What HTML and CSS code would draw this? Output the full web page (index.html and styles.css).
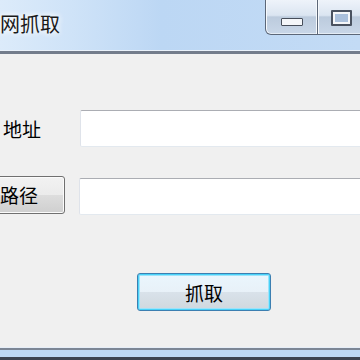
FILE: index.html
```html
<!DOCTYPE html>
<html lang="zh-CN">
<head>
    <meta charset="UTF-8">
    <meta name="viewport" content="width=device-width, initial-scale=1.0">
    <title>网页抓取</title>
    <link rel="stylesheet" href="styles.css">
</head>
<body>
    <div class="window">
        <div class="titlebar">
            <div class="title">网抓取</div>
            <div class="controls">
                <div class="ctl ctl-min"><span class="glyph-min"></span></div>
                <div class="ctl ctl-max"><span class="glyph-max"></span></div>
            </div>
        </div>

        <div class="client">
            <div class="row row-url">
                <div class="label">地址</div>
                <input class="textbox" type="text">
            </div>
            <div class="row row-path">
                <button class="btn btn-path">路径</button>
                <input class="textbox" type="text">
            </div>
            <div class="row row-go">
                <button class="btn btn-default">抓取</button>
            </div>
        </div>

        <div class="frame-bottom"></div>
    </div>
</body>
</html>
```

FILE: styles.css
```css
html, body {
    margin: 0;
    padding: 0;
}
body {
    width: 360px;
    height: 360px;
    overflow: hidden;
    font-family: "Noto Sans CJK SC", "Liberation Sans", sans-serif;
    background-color: #f0f0f0;
}
.window {
    display: flex;
    flex-direction: column;
    height: 360px;
}

/* title bar */
.titlebar {
    height: 50px;
    display: flex;
    justify-content: space-between;
    background: linear-gradient(90deg, #dcebfa 0%, #cfe3f8 20%, #bcd7f4 45%, #c3dbf5 100%);
    border-bottom: 1px solid #e9f1fa;
    box-shadow: 0 1px 0 #f7f7f7;
}
.title {
    margin-left: 0;
    padding-top: 11px;
    font-size: 20px;
    line-height: 26px;
    color: #1a1a1a;
    text-shadow: 0 0 6px #ffffff, 0 0 6px #ffffff;
}
.controls {
    display: flex;
    height: 35px;
    margin-right: -10px;
}
.ctl {
    display: flex;
    align-items: center;
    justify-content: center;
    background: linear-gradient(#eef3fa 0%, #dbe5f1 45%, #bccbdd 50%, #c9d7e8 100%);
    border: 1px solid #5c6778;
    border-top: none;
    box-shadow: inset 1px 0 0 #f6f9fc, inset -1px 0 0 #f6f9fc, inset 0 -1px 0 #e4ecf5;
}
.ctl-min {
    width: 51px;
    border-bottom-left-radius: 6px;
}
.ctl-max {
    width: 52px;
    border-left: none;
    justify-content: flex-start;
    padding-left: 13px;
    box-sizing: border-box;
}
.glyph-min {
    width: 20px;
    height: 6px;
    margin-top: 10px;
    background: #f4f6f9;
    border: 1px solid #474e5a;
    border-radius: 1px;
}
.glyph-max {
    width: 17px;
    height: 12px;
    margin-top: 1px;
    background: #aac0dc;
    border: 2px solid #4a5260;
    box-shadow: inset 0 0 0 2px #f4f6f9;
    border-radius: 1px;
}

/* client area */
.client {
    flex: 1;
    border-top: 3px solid #737c8b;
    padding-top: 56px;
    box-sizing: border-box;
}
.row {
    display: flex;
    align-items: center;
}
.row-path {
    margin-top: 29px;
}
.row-go {
    margin-top: 58px;
}
.label {
    width: 80px;
    padding-left: 3px;
    box-sizing: border-box;
    font-size: 19px;
    color: #000000;
    white-space: nowrap;
    flex-shrink: 0;
}
.textbox {
    flex: 1;
    height: 37px;
    margin: 0 -20px 0 0;
    padding: 0;
    box-sizing: border-box;
    background: #ffffff;
    border: 1px solid #dfe3ea;
    border-top-color: #abadb3;
    border-bottom-color: #e3e9ef;
    border-radius: 2px;
    outline: none;
}
.btn {
    font-family: inherit;
    font-size: 19px;
    color: #000000;
    height: 38px;
    padding: 0;
    border: 1px solid #707070;
    border-radius: 3px;
    background: linear-gradient(#f2f2f2 0%, #ebebeb 50%, #dddddd 51%, #cfcfcf 100%);
    box-shadow: inset 0 0 0 1px #fbfbfb;
}
.btn-path {
    width: 86px;
    margin-left: -21px;
    margin-right: 14px;
    flex-shrink: 0;
    text-align: right;
    padding-right: 26px;
    margin-top: -2px;
}
.btn-path + .textbox {
    margin-top: 2px;
}
.btn-default {
    width: 134px;
    margin-left: 137px;
    border-color: #3c7fb1;
    box-shadow: inset 0 0 0 1px #48d2f8, inset 0 0 0 2px #9ee3fa;
    background: linear-gradient(#eaf6fd 0%, #e8f1f8 50%, #d9e2ea 51%, #d0d8de 100%);
}

/* bottom frame */
.frame-bottom {
    height: 13px;
    background: #bcd7f4;
    border-top: 1px solid #e6eef8;
    box-shadow: inset 0 2px 0 #7c8695;
    border-bottom: 3px solid #3b4250;
    box-sizing: border-box;
}
```
